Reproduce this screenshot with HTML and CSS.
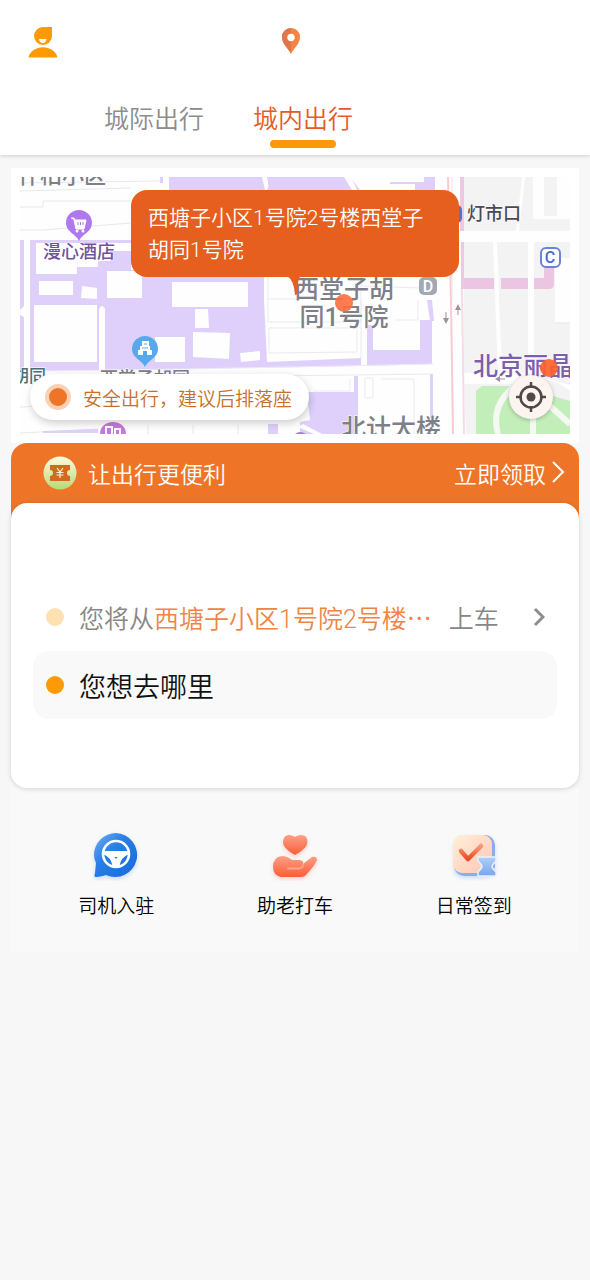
FILE: index.html
```html
<!DOCTYPE html>
<html lang="zh-CN">
<head>
<meta charset="utf-8">
<meta name="viewport" content="width=device-width, initial-scale=1">
<title>城内出行</title>
<link rel="stylesheet" href="styles.css">
</head>
<body>
<header class="header">
  <div class="topbar">
    <button class="icon-btn" type="button" aria-label="个人中心">
      <svg width="30" height="32" viewBox="0 0 30 32"><path d="M15 1H24V10A9 9 0 1 1 15 1Z" fill="#fd9a05"/><path d="M11 13H18.500Q18 17 14.800 17Q11.500 17 11 13Z" fill="#fff"/><path d="M.5 31.500Q1 27 6.500 23.500Q15 19 23.500 23.500Q29 27 29.300 31.500Z" fill="#fd9a05"/></svg>
    </button>
    <button class="icon-btn" type="button" aria-label="当前位置">
      <svg width="20" height="28" viewBox="0 0 20 28"><path d="M10 0A9 9 0 0 0 1 9.500C1 16 8 21 10 26C12 21 19 16 19 9.500A9 9 0 0 0 10 0Z" fill="#f58345"/><path d="M10 0A9 9 0 0 0 1 9.500C1 16 8 21 10 26Z" fill="#e0764a"/><circle cx="10" cy="9.500" r="3.700" fill="#fff"/></svg>
    </button>
    <span class="spacer"></span>
  </div>
  <nav class="tabs">
    <button class="tab" type="button">城际出行</button>
    <button class="tab tab-active" type="button">城内出行</button>
  </nav>
</header>

<main class="main">
  <section class="map" aria-label="地图">
    <svg class="map-canvas" viewBox="20 177 550 257">
      <rect x="20" y="177" width="550" height="257" fill="#fefefe"/>
      <g fill="none" stroke="#e8e7eb" stroke-width="1">
        <path d="M20 183L160 181M20 191L131 188M20 207H43V201H131M20 230H43L131 223M20 407L43 406M20 433L98 429M148 425V434M193 425V434M238 425V434"/>
      </g>
      <g fill="#ded0fb">
        <path d="M160 177H163V183H160ZM169 177H262L265 190H169ZM267 177Q270 190 266 190H360L350 177ZM424 177H435V190H415V184H390V182H424Z"/>
        <path d="M20 240H24V306L20 310ZM20 315L24 317V370L20 373Z"/>
        <path d="M30 240H131V270H264V300L267 362L361 358V366L190 369L30 371Z"/>
        <path d="M367 325H420V320L432 320V364L367 366ZM430 374H433V418H430ZM427 300H432L434 321H430Z"/>
        <path d="M307 392H354V376H358V434H300V422L310 420ZM268 424H278V434H268ZM43 431L98 429V433H43Z"/>
      </g>
      <g fill="#fefefe">
        <path d="M36 243H131V251H110V261H98V267H77V274H36ZM39 281H73V295H39ZM82 286L97 288V299L81 298ZM107 271H142V298H107ZM34 305H97V362H34Z"/>
        <path d="M99 370V309Q102 303 105 309V370ZM172 282H248V307H172ZM195 309H208L209 328H195ZM193 332L230 333L229 359L193 357ZM240 353L260 351V360L241 362ZM155 337H185V362H155ZM373 325H420V350H373Z"/>
        <path d="M303 424L322 434H314L298 427ZM351 177L357 190H352L344 177Z"/>
      </g>
      <path d="M30 371L190 369L433 364" stroke="#eee9f8" fill="none"/>
      <path d="M20 377L190 377L433 374" stroke="#e9e8ec" fill="none"/>
      <g fill="none" stroke="#ebe9ee">
        <path d="M268 277V322H361V277M290 277L300 297M269 328H357V352L269 353ZM268 299H298M361 300V358M365 378H373V398H365ZM381 379H414V434M350 379V391H314M418 300V320H395M361 286L422 288"/>
      </g>
      <g fill="#f4f3f4">
        <path d="M464 177H522L516 231H464ZM525 177H533V219H570V231H519ZM544 177H557V216H544ZM464 242H493L498 373H464ZM497 242H528V373H502ZM534 242H570V258H555V323H570V434H534Z"/>
        <path d="M464 384H520V434H466Z"/>
      </g>
      <path d="M525 373L570 385V391Q550 374 520 380Z" fill="#fefefe"/>
      <path d="M555 323H570" stroke="#e7e7e9"/>
      <path d="M464 278H494V289H464ZM501 278H528V289H501ZM534 278H544V267H554V284Q554 289 549 289H534Z" fill="#ebc5e2"/>
      <path d="M460 177H464V231H460ZM461 242H464V289H461Z" fill="#ecc9e3"/>
      <path d="M448 177L451 300L453 434" stroke="#f8cbd0" stroke-width="2" fill="none"/>
      <path d="M452 177V300" stroke="#f8dfe2" fill="none"/>
      <path d="M462 289L464 434" stroke="#f5dbe3" stroke-width="2" fill="none"/>
      <path d="M476 434V391L482 386H520L570 401V434Z" fill="#c2eeb9"/>
      <path d="M515 386Q490 405 498 434M533 415V434M550 406L570 424" stroke="#f6f8f4" stroke-width="6" fill="none"/>
      <g stroke="#a19298" fill="none"><path d="M446 312V321M458 306V315M498 379H505"/></g>
      <path d="M443 318H449L446 324ZM455 310H461L458 304ZM500 376V382L495 379Z" fill="#a19298"/>

      <g class="map-label">
        <text class="lbl-gray" x="18" y="183" font-size="22">什柏小区</text>
        <text class="lbl-purple" x="43" y="258" font-size="18">漫心酒店</text>
        <text class="lbl-gray" x="344" y="298" font-size="25" text-anchor="middle">西堂子胡</text>
        <text class="lbl-gray" x="344" y="326" font-size="25" text-anchor="middle">同1号院</text>
        <text class="lbl-dark" x="467" y="220" font-size="18">灯市口</text>
        <text class="lbl-violet" x="473" y="375" font-size="25">北京丽晶</text>
        <text class="lbl-gray" x="341" y="437" font-size="25">北计大楼</text>
        <text class="lbl-teal" x="12" y="382" font-size="17">胡同</text>
        <text class="lbl-gray" x="100" y="385" font-size="18">西堂子胡同</text>
      </g>

      <path d="M79 210A13 13 0 0 0 66 223C66 232 76 234 79 241C82 234 92 232 92 223A13 13 0 0 0 79 210Z" fill="#b078ee"/>
      <path d="M71 218H74L75 220H86L84 229H76L74 220" fill="#fff" stroke="#fff"/><path d="M78 222V225M80.500 222V225M83 222V225" stroke="#b078ee"/><circle cx="77" cy="231" r="1.500" fill="#fff"/><circle cx="83" cy="231" r="1.500" fill="#fff"/>
      <path d="M145 336A13 13 0 0 0 132 349C132 358 142 360 145 367C148 360 158 358 158 349A13 13 0 0 0 145 336Z" fill="#57a9ee"/>
      <path d="M138 355V350H140V346H142V341H149V346H150V350H152V355H147V351H143V355Z" fill="#fff"/><path d="M144 344H147M142 348H148" stroke="#57a9ee"/>
      <path d="M100 434C100 418 126 418 126 434Z" fill="#c678dd"/><path d="M106 434V427H112V434M115 434V429H120V434" fill="none" stroke="#fff" stroke-width="2"/>
      <path d="M295 434Q300 430 306 434Z" fill="#a27be6"/>
      <rect x="419" y="277" width="18" height="18" rx="5" fill="#a3a8b6"/><text class="map-badge" x="428" y="292" fill="#fff">D</text>
      <rect x="541" y="248" width="19" height="19" rx="5" fill="#fff" stroke="#6a82d8" stroke-width="2"/><text class="map-badge" x="550" y="263" fill="#4a69d4">C</text>
      <rect x="446" y="205" width="16" height="18" rx="5" fill="#4a78d0"/>
      <circle cx="344" cy="303" r="9" fill="#ff6d3d" fill-opacity=".9"/>
      <circle cx="549" cy="368" r="9" fill="#ff622b" fill-opacity=".92"/>
      <path d="M287 276H301Q297 278 298 294L295 295Q294 280 287 276Z" fill="#e65f1e"/>
    </svg>
    <div class="bubble">西塘子小区1号院2号楼西堂子胡同1号院</div>
    <div class="tip"><span class="tip-dot"></span>安全出行，建议后排落座</div>
    <button class="locate" type="button" aria-label="定位">
      <svg width="30" height="30" viewBox="0 0 30 30"><circle cx="15" cy="15" r="10.500" fill="none" stroke="#4f4a46" stroke-width="2.500"/><path d="M15 0V6M15 24V30M0 15H6M24 15H30" stroke="#4f4a46" stroke-width="2.500"/><circle cx="15" cy="15" r="4.500" fill="#4f4a46"/></svg>
    </button>
  </section>

  <section class="promo">
    <svg width="34" height="34" viewBox="0 0 34 34"><defs><linearGradient id="coin" x1="0" y1="0" x2="0" y2="1"><stop offset="0" stop-color="#fff9e0"/><stop offset="1" stop-color="#b9d975"/></linearGradient></defs><circle cx="17" cy="17" r="16.500" fill="url(#coin)"/><path d="M7 9H27V14A3 3 0 0 0 27 20V25H7V20A3 3 0 0 0 7 14Z" fill="#cf6b20"/><path d="M14 12L17 16L20 12M17 16V22M13.500 16.500H20.500M13.500 19H20.500" fill="none" stroke="#fff0d0" stroke-width="1.200"/></svg>
    <span class="promo-title">让出行更便利</span>
    <button class="promo-link" type="button">立即领取<svg width="14" height="24" viewBox="0 0 14 24"><path d="M2 1L12 11L2 21" fill="none" stroke="#fff" stroke-width="2"/></svg></button>
  </section>

  <section class="trip">
    <button class="row" type="button">
      <span class="dot dot-pale"></span>
      <span class="from">您将从<span class="place">西塘子小区1号院2号楼<span class="cjk">…</span></span></span>
      <span class="board">上车</span>
      <svg class="chev" width="12" height="20" viewBox="0 0 12 20"><path d="M2 2L10 10L2 18" fill="none" stroke="#8e8e8e" stroke-width="3"/></svg>
    </button>
    <button class="row row-dest" type="button">
      <span class="dot"></span>
      <span>您想去哪里</span>
    </button>
  </section>

  <nav class="services">
    <button class="service" type="button">
      <svg width="52" height="52" viewBox="0 0 52 52"><defs><linearGradient id="blue" x1="0" y1="0" x2="1" y2="1"><stop offset="0" stop-color="#72b0f2"/><stop offset=".4" stop-color="#287fe4"/><stop offset="1" stop-color="#1669df"/></linearGradient></defs><path d="M26 4A22 22 0 1 1 16 46Q9 48 5 48Q4 47 5 44L6 34Q4 30 4 26A22 22 0 0 1 26 4Z" fill="url(#blue)" class="glow-blue"/><circle cx="26" cy="25" r="13" fill="none" stroke="#fff" stroke-width="2.600"/><path d="M13 22H39V25Q31 28 29.500 37H22.500Q21 28 13 25Z" fill="#fff"/><path d="M24.500 28H27.500L26 30Z" fill="#1c70e0"/></svg>
      <span>司机入驻</span>
    </button>
    <button class="service" type="button">
      <svg width="52" height="52" viewBox="0 0 52 52"><defs><linearGradient id="red" x1="0" y1="0" x2="0" y2="1"><stop offset="0" stop-color="#fba184"/><stop offset="1" stop-color="#fb5c3b"/></linearGradient></defs><g class="glow-red" fill="url(#red)"><path d="M26 26Q13 19 14 12Q15 6 20 6Q23 6 26 8Q29 6 32 6Q38 6 38.500 12Q39 19 26 26Z"/><path d="M12 48Q4 46 4 38Q4 28 13 27Q18 27 23 31H31Q35 32 34 35L43 28Q48 27 48 31Q47 35 37 46Q35 48 32 48Z"/></g><path d="M19 39.500H30Q34 39 34 36" fill="none" stroke="#ffa388" stroke-width="2" stroke-linecap="round"/></svg>
      <span>助老打车</span>
    </button>
    <button class="service" type="button">
      <svg width="52" height="52" viewBox="0 0 52 52"><defs><linearGradient id="peach" x1="0" y1="0" x2="1" y2="1"><stop offset="0" stop-color="#fff0d8"/><stop offset="1" stop-color="#ffc5b4"/></linearGradient><linearGradient id="sky" x1="0" y1="0" x2="0" y2="1"><stop offset="0" stop-color="#b0d0f8"/><stop offset="1" stop-color="#78a5f0"/></linearGradient><linearGradient id="tick" x1="0" y1="0" x2="0" y2="1"><stop offset="0" stop-color="#f79a73"/><stop offset="1" stop-color="#ed4a25"/></linearGradient></defs><rect x="6" y="6" width="41" height="41" rx="10" fill="#8eacec" class="glow-blue"/><rect x="5" y="6" width="39" height="38" rx="9" fill="url(#peach)"/><path d="M13 22L20 30L33 17" fill="none" stroke="url(#tick)" stroke-width="4.500" stroke-linecap="round" stroke-linejoin="round"/><path d="M30 28H48V32Q44 36 44 37.500Q44 39 48 43V47H30V43Q34 39 34 37.500Q34 36 30 32Z" fill="url(#sky)" stroke="#e9f1fd" stroke-width="1.500" stroke-linejoin="round"/></svg>
      <span>日常签到</span>
    </button>
  </nav>
</main>
</body>
</html>
```
FILE: styles.css
```css
* { box-sizing: border-box; }
body {
  margin: 0;
  min-height: 100vh;
  background: #f7f7f7;
  font-family: Roboto, "Noto Sans CJK SC", sans-serif;
  font-weight: 350;
  color: #222;
}
button {
  margin: 0;
  padding: 0;
  border: 0;
  background: none;
  font: inherit;
  color: inherit;
  text-align: left;
}
svg { display: block; flex: none; }

.header {
  background: #fff;
  padding: 25px 28px 6px;
  box-shadow: 0 1px 4px rgba(0, 0, 0, .16);
}
.topbar {
  display: flex;
  justify-content: space-between;
  align-items: center;
  height: 33px;
}
.spacer { width: 38px; }
.tabs {
  display: flex;
  gap: 49px;
  padding: 42px 0 0 76px;
}
.tab {
  display: flex;
  flex-direction: column;
  align-items: center;
  font-size: 25px;
  line-height: 40px;
  height: 49px;
  color: #8c8c8c;
}
.tab-active { color: #e55a28; }
.tab-active::after {
  content: "";
  width: 66px;
  height: 8px;
  border-radius: 4px;
  background: #fc9909;
}

.main { padding: 13px 11px 0; }

.map {
  position: relative;
  padding: 9px;
  background: #fff;
}
.map-canvas { width: 100%; height: auto; }
.map-label text {
  font-family: Roboto, "Noto Sans CJK SC", sans-serif;
  font-weight: 500;
  stroke: #fff;
  stroke-width: 1px;
  paint-order: stroke;
}
.lbl-gray { fill: #7d8088; }
.lbl-purple { fill: #72539c; }
.lbl-dark { fill: #454b55; }
.lbl-violet { fill: #7c5fac; }
.lbl-teal { fill: #4d6e78; }
.map-badge {
  font-size: 16px;
  font-weight: 500;
  text-anchor: middle;
}
.bubble {
  position: absolute;
  left: 120px;
  top: 22px;
  width: 328px;
  padding: 12px 16px 11px 17px;
  border-radius: 16px;
  background: #e65f1e;
  color: #fff;
  font-size: 21px;
  line-height: 32px;
}
.tip {
  position: absolute;
  left: 19px;
  bottom: 23px;
  display: flex;
  align-items: center;
  gap: 12px;
  height: 46px;
  padding: 0 17px 0 15px;
  border-radius: 23px;
  background: #fff;
  box-shadow: 1px 3px 8px rgba(0, 0, 0, .2);
  color: #c87028;
  font-size: 19px;
}
.tip-dot {
  width: 26px;
  height: 26px;
  border: 4px solid #fbd0b4;
  border-radius: 50%;
  background: #ee7527;
}
.locate {
  position: absolute;
  right: 26px;
  bottom: 24px;
  display: grid;
  place-items: center;
  width: 44px;
  height: 44px;
  border-radius: 50%;
  background: #fcf4ee;
  box-shadow: 0 1px 4px rgba(0, 0, 0, .25);
}

.promo {
  display: flex;
  align-items: center;
  gap: 11px;
  height: 76px;
  padding: 0 14px 16px 32px;
  border-radius: 16px 16px 0 0;
  background: #ee7527;
  color: #fff;
  font-size: 23px;
}
.promo-title { flex: 1; }
.promo-link {
  display: flex;
  align-items: center;
  gap: 5px;
}

.trip {
  position: relative;
  margin-top: -16px;
  padding: 80px 22px 69px;
  border-radius: 16px;
  background: #fff;
  box-shadow: 0 1px 5px rgba(0, 0, 0, .15);
}
.row {
  display: flex;
  align-items: center;
  width: 100%;
  height: 68px;
  padding: 0 12px 0 13px;
  font-size: 25px;
  color: #878787;
}
.row-dest {
  border-radius: 16px;
  background: #f9f9f9;
  font-size: 27px;
  color: #111;
}
.dot {
  flex: none;
  width: 18px;
  height: 18px;
  margin-right: 15px;
  border-radius: 50%;
  background: #fd9a05;
}
.dot-pale { background: #ffe0b2; }
.place { color: #f08445; }
.cjk { font-family: "Noto Sans CJK SC", sans-serif; }
.board { margin: 0 auto 0 17px; }

.services {
  display: grid;
  grid-template-columns: repeat(3, 1fr);
  height: 164px;
  padding: 41px 16px 0;
  background: #f9f9f9;
}
.service {
  display: flex;
  flex-direction: column;
  align-items: center;
  gap: 12px;
  height: 100px;
  font-size: 19px;
  line-height: 28px;
  color: #000;
}
.glow-blue { filter: drop-shadow(0 2px 2px rgba(60, 130, 240, .25)); }
.glow-red { filter: drop-shadow(0 2px 2px rgba(250, 90, 50, .25)); }
```
